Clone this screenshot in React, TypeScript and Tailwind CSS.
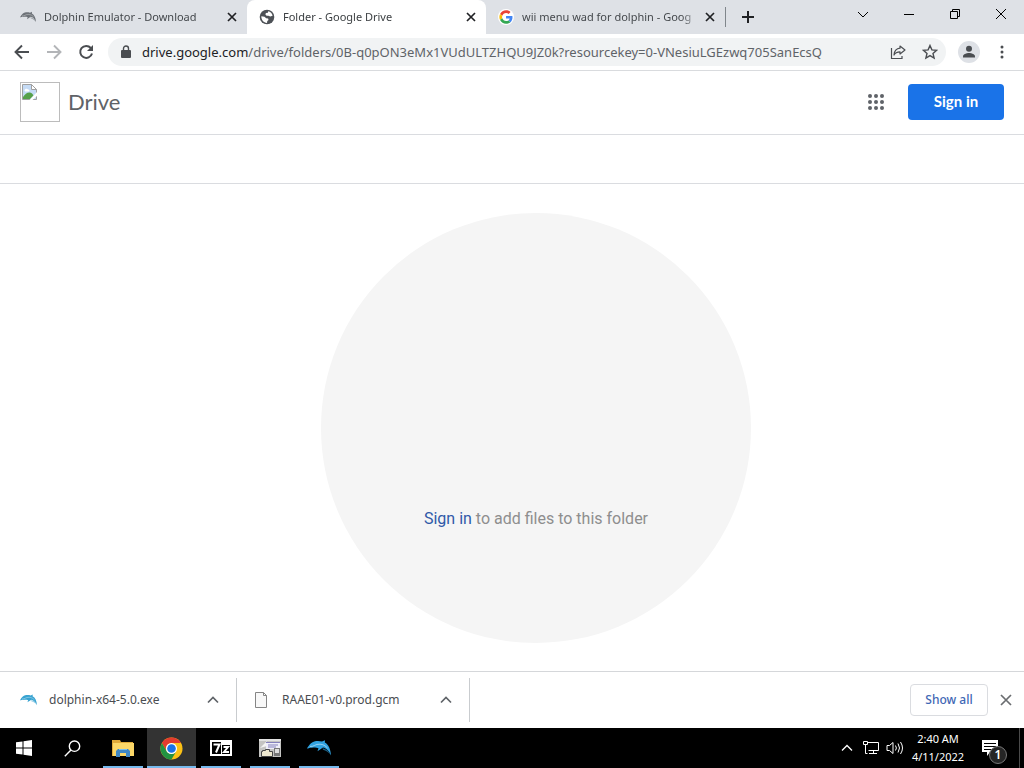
import React from "react";

type IconProps = { className?: string };

const CloseIcon = ({ className = "" }: IconProps) => (
  <svg viewBox="0 0 16 16" className={className} fill="none" stroke="currentColor" aria-hidden="true">
    <path d="M4 4l8 8M12 4l-8 8" />
  </svg>
);

const ChevronUp = ({ className = "" }: IconProps) => (
  <svg viewBox="0 0 12 12" className={className} fill="none" stroke="currentColor" aria-hidden="true">
    <path d="M1 8.5L6 3.5l5 5" />
  </svg>
);

const DolphinIcon = ({ className = "" }: IconProps) => (
  <svg viewBox="0 0 24 16" className={className} fill="currentColor" aria-hidden="true">
    <path d="M0 8.200C1.500 6 2.500 4.500 4 3.200 7 .8 11.500.6 15 1.600L18 .2l-.2 2.400C21.500 4.500 23.600 9 24 15.500 22.300 11.500 19.500 8.200 16 7.600l-5.500 3.600 1-2.900C8.500 7 6 8 4.200 7.800 2.500 7.700 1.500 8.800 0 8.200z" />
    <path d="M15.500 8.200c3.300.5 5.700 2.300 8.500 6.800-3-3-5-4.200-8-5.200z" opacity=".6" />
    <path d="M3 6.400C7 7 8 3.800 13 4.200c3.500.2 5.500 1.600 7.500 3.800" fill="none" stroke="#ffffff" strokeWidth=".9" opacity=".55" />
  </svg>
);

const GlobeIcon = () => (
  <svg viewBox="0 0 16 16" className="size-4 shrink-0" aria-hidden="true">
    <circle cx="8" cy="8" r="7.300" fill="#4d5156" />
    <path d="M9.200 2.300c2.200.5 3.900 2.200 4.400 4.400l-2.300.8-1.900-.8H7.600L6.400 5.600l.5-1.500 2-.4z" fill="#fff" />
    <path d="M2.300 7.200l3.200.5 1.700 1.500 1.900.4.400 1.500-1.200 1-.3 1.800C4.800 13.700 2.200 11 2.300 7.200z" fill="#fff" />
  </svg>
);

const GoogleIcon = () => (
  <svg viewBox="0 0 48 48" className="size-4 shrink-0" aria-hidden="true">
    <circle cx="24" cy="24" r="24" fill="#fff" />
    <g transform="translate(4 4) scale(.84)">
      <path fill="#EA4335" d="M24 9.500c3.540 0 6.710 1.220 9.210 3.600l6.850-6.850C35.900 2.380 30.470 0 24 0 14.620 0 6.510 5.380 2.560 13.220l7.980 6.190C12.430 13.720 17.740 9.500 24 9.500z" />
      <path fill="#4285F4" d="M46.980 24.550c0-1.570-.15-3.090-.38-4.550H24v9.020h12.940c-.58 2.960-2.260 5.480-4.780 7.180l7.730 6c4.510-4.180 7.090-10.360 7.090-17.650z" />
      <path fill="#FBBC05" d="M10.530 28.590A14.500 14.500 0 0 1 9.770 24c0-1.600.27-3.140.76-4.590l-7.980-6.190A23.990 23.990 0 0 0 0 24c0 3.880.92 7.540 2.560 10.780z" />
      <path fill="#34A853" d="M24 48c6.480 0 11.930-2.130 15.890-5.810l-7.730-6c-2.150 1.450-4.920 2.300-8.160 2.300-6.260 0-11.570-4.220-13.470-9.910l-7.980 6.190C6.510 42.620 14.620 48 24 48z" />
    </g>
  </svg>
);

type TabProps = { title: string; icon: React.ReactNode; active?: boolean };

const Tab = ({ title, icon, active = false }: TabProps) => (
  <div
    className={`flex h-[34px] w-[239px] items-center gap-2 pl-3 pr-[7px] ${
      active ? "rounded-t-lg bg-white text-[#3c4043]" : "text-[#45494d]"
    }`}
  >
    {icon}
    <span className="min-w-0 flex-1 whitespace-nowrap mask-r-from-[160px] mask-r-to-[178px] text-[11px] leading-4">
      {title}
    </span>
    <button aria-label={`Close ${title}`} className="size-4 text-[#202124]">
      <CloseIcon className="size-4 stroke-[1.700]" />
    </button>
  </div>
);

const TabStrip = () => (
  <div className="flex h-[34px] bg-[#dee1e6]">
    <div className="flex min-w-0 flex-1 items-center pl-2">
      <Tab title="Dolphin Emulator - Download" icon={<DolphinIcon className="h-3 w-4 shrink-0 text-[#6d7278]" />} />
      <Tab title="Folder - Google Drive" icon={<GlobeIcon />} active />
      <Tab title="wii menu wad for dolphin - Goog" icon={<GoogleIcon />} />
      <div className="h-5 w-px bg-[#80868b]" />
      <button aria-label="New tab" className="ml-[14px] size-4 text-[#202124]">
        <svg viewBox="0 0 16 16" className="size-4" stroke="currentColor" strokeWidth="2" aria-hidden="true">
          <path d="M8 2v12M2 8h12" />
        </svg>
      </button>
    </div>
    <div className="flex h-7 text-black">
      <button aria-label="Search tabs" className="flex w-[46px] items-center justify-center">
        <svg viewBox="0 0 12 12" className="size-3" fill="none" stroke="currentColor">
          <path d="M1 4l5 5 5-5" />
        </svg>
      </button>
      <button aria-label="Minimize" className="flex w-[46px] items-center justify-center">
        <svg viewBox="0 0 10 10" className="size-[10px]" stroke="currentColor">
          <path d="M0 5.500h10" />
        </svg>
      </button>
      <button aria-label="Restore" className="flex w-[46px] items-center justify-center">
        <svg viewBox="0 0 10 10" className="size-[10px]" fill="none" stroke="currentColor">
          <path d="M.5 2.500h7v7h-7zM2.500 2.500v-2h7v7h-2" />
        </svg>
      </button>
      <button aria-label="Close window" className="flex w-[46px] items-center justify-center">
        <svg viewBox="0 0 10 10" className="size-[10px]" stroke="currentColor">
          <path d="M0 0l10 10M10 0L0 10" />
        </svg>
      </button>
    </div>
  </div>
);

const Toolbar = () => (
  <div className="flex h-[37px] items-center border-b border-[#d9dbde] bg-white pl-3 pr-[14px] text-[#4a4d51]">
    <div className="flex gap-3">
      <button aria-label="Back" className="size-5">
        <svg viewBox="0 0 20 20" className="size-5" fill="none" stroke="currentColor" strokeWidth="1.900">
          <path d="M17 10H4M10 3.500L3.500 10l6.500 6.500" />
        </svg>
      </button>
      <button aria-label="Forward" className="size-5 text-[#b3b5b8]">
        <svg viewBox="0 0 20 20" className="size-5" fill="none" stroke="currentColor" strokeWidth="1.900">
          <path d="M3 10h13M10 3.500l6.500 6.500-6.500 6.500" />
        </svg>
      </button>
      <button aria-label="Reload" className="size-5">
        <svg viewBox="0 0 20 20" className="size-5" fill="none" stroke="currentColor" strokeWidth="2">
          <path d="M14.800 6A6 6 0 1 0 16 11.500" />
          <path d="M17 3v6h-6z" fill="currentColor" stroke="none" />
        </svg>
      </button>
    </div>
    <div className="ml-3 flex h-7 min-w-0 flex-1 items-center rounded-full bg-[#f1f3f4] pl-3 pr-2">
      <svg viewBox="0 0 12 14" className="h-[14px] w-3 shrink-0" aria-hidden="true">
        <rect x="1" y="5" width="10" height="8" rx="1" fill="currentColor" />
        <path d="M3.500 5V3.500a2.500 2.500 0 0 1 5 0V5" fill="none" stroke="currentColor" strokeWidth="1.400" />
      </svg>
      <div className="ml-[10px] min-w-0 flex-1 overflow-hidden whitespace-nowrap text-[13px] leading-5 text-[#5f6368]">
        <span className="text-[#202124]">drive.google.com</span>
        /drive/folders/0B-q0pON3eMx1VUdULTZHQU9JZ0k?resourcekey=0-VNesiuLGEzwq705SanEcsQ
      </div>
      <button aria-label="Share" className="size-4">
        <svg viewBox="0 0 16 16" className="size-4" fill="none" stroke="currentColor" strokeWidth="1.200">
          <path d="M1.500 4v10.500h10.500v-2.500" />
          <path d="M10 2l5 4-5 4V7.800C7 7.800 5 9 4 11 4.300 7.200 6.300 4.600 10 4.200z" strokeLinejoin="round" />
        </svg>
      </button>
      <button aria-label="Bookmark" className="ml-4 size-4">
        <svg viewBox="0 0 16 16" className="size-4" fill="none" stroke="currentColor" strokeWidth="1.400">
          <path d="M8 1.500l1.900 4.400 4.700.4-3.600 3.100 1.100 4.700L8 11.600l-4.100 2.500L5 9.400 1.400 6.300l4.700-.4z" />
        </svg>
      </button>
    </div>
    <button aria-label="Profile" className="ml-3 size-[22px]">
      <svg viewBox="0 0 22 22" className="size-[22px]">
        <circle cx="11" cy="11" r="11" fill="#dee1e6" />
        <circle cx="11" cy="7.800" r="3" fill="currentColor" />
        <path d="M5 16.500v-1.200c0-2 3.500-3.300 6-3.300s6 1.300 6 3.300v1.200z" fill="currentColor" />
      </svg>
    </button>
    <button aria-label="Menu" className="ml-[14px] h-4 w-4">
      <svg viewBox="0 0 16 16" className="size-4" fill="currentColor">
        <circle cx="8" cy="3" r="1.500" />
        <circle cx="8" cy="8" r="1.500" />
        <circle cx="8" cy="13" r="1.500" />
      </svg>
    </button>
  </div>
);

const MissingImage = () => (
  <svg viewBox="0 0 40 40" className="size-10" aria-hidden="true">
    <rect x=".5" y=".5" width="39" height="39" fill="#fff" stroke="#bcbcbc" />
    <path d="M2.500 2.500h9l5 5v10h-14z" fill="#c5dbf5" stroke="#a0a0a0" />
    <path d="M4.500 8.500c0-2 3-2.500 3.500-1 1.500-.3 2 1.800.5 2H5z" fill="#fff" />
    <path d="M3 17v-2c2-3 4.500-5 7-4.500 2 .3 3 2 3.500 3L10 17z" fill="#56a04a" />
    <path d="M11.500 2.500v5h5z" fill="#fff" stroke="#a0a0a0" />
    <path d="M17.500 9.500L9.500 18h3l5-4.500z" fill="#fff" />
  </svg>
);

const DriveHeader = () => (
  <header className="flex h-16 items-center border-b border-[#dadce0] px-5 pb-[2px]">
    <a href="#" className="flex items-center gap-2">
      <MissingImage />
      <span className="font-['Lato'] text-[22px] leading-8 text-[#5f6368]">Drive</span>
    </a>
    <button aria-label="Google apps" className="ml-auto size-4 text-[#5f6368]">
      <svg viewBox="0 0 16 16" className="size-4" fill="currentColor">
        {[2, 8, 14].map((y) => [2, 8, 14].map((x) => <circle key={`${x}-${y}`} cx={x} cy={y} r="2" />))}
      </svg>
    </button>
    <button className="ml-6 h-9 w-24 rounded bg-[#1a73e8] pb-[2px] font-['Lato'] text-[15px] font-bold leading-5 text-white">
      Sign in
    </button>
  </header>
);

const FolderView = () => (
  <main className="flex flex-1 items-start justify-center pb-7 pl-12 pt-[29px]">
    <div className="flex size-[430px] justify-center rounded-full bg-[#f5f5f5] pt-[294px] font-['Roboto'] text-[16px] leading-6 text-[#8e8e8e]">
      <p>
        <a href="#" className="text-[#3059a8]">Sign in</a> to add files to this folder
      </p>
    </div>
  </main>
);

type DownloadProps = { name: string; icon: React.ReactNode };

const Download = ({ name, icon }: DownloadProps) => (
  <div className="flex h-11 w-[233px] items-center border-r border-[#c9cccf] pl-4 pr-[17px]">
    {icon}
    <span className="ml-3 flex-1 text-[12px] leading-5 text-[#4a4d51]">{name}</span>
    <button aria-label={`Options for ${name}`} className="size-3 text-[#5f6368]">
      <ChevronUp className="size-3 stroke-[1.700]" />
    </button>
  </div>
);

const DownloadShelf = () => (
  <div className="flex h-[57px] items-center border-t border-[#d5d7da] bg-white pl-1 pr-[10px]">
    <Download name="dolphin-x64-5.0.exe" icon={<DolphinIcon className="h-3 w-[17px] text-[#38a3d1]" />} />
    <Download
      name="RAAE01-v0.prod.gcm"
      icon={
        <svg viewBox="0 0 17 18" className="h-[18px] w-[17px]" fill="#f8f8f8" stroke="#858585" aria-hidden="true">
          <path d="M2.500 1.500h8l3 3v12h-11zM10.500 1.500v3h3" />
        </svg>
      }
    />
    <button className="ml-auto h-8 w-[78px] rounded border border-[#dadce0] pb-px text-[12px] font-medium leading-4 text-[#3f68b5]">
      Show all
    </button>
    <button aria-label="Close downloads" className="ml-[10px] size-4 text-[#6a6d70]">
      <svg viewBox="0 0 16 16" className="size-4" stroke="currentColor" strokeWidth="1.700">
        <path d="M3 3l10 10M13 3L3 13" />
      </svg>
    </button>
  </div>
);

const FolderIcon = () => (
  <svg viewBox="0 0 22 18" className="h-[18px] w-[22px]" aria-hidden="true">
    <path d="M0 1h8l1 2h12v14H0z" fill="#e0aa3a" />
    <path d="M1 4h21v13H1z" fill="#fbd768" />
    <path d="M4 18v-6l2-2h10l2 2v6h-4v-4H8v4z" fill="#3f87c4" />
    <path d="M7 10h8v1H7z" fill="#7cc1ee" />
  </svg>
);

const ChromeIcon = () => (
  <svg viewBox="0 0 48 48" className="size-[23px]" aria-hidden="true">
    <circle cx="24" cy="24" r="23" fill="#fbc116" />
    <path d="M4.080 12.500A23 23 0 0 1 43.920 12.500H24A11.500 11.500 0 0 0 14.040 29.750z" fill="#e33b2e" />
    <path d="M4.080 12.500A23 23 0 0 0 24 47l9.960-17.250A11.500 11.500 0 0 1 14.040 29.750z" fill="#229342" />
    <circle cx="24" cy="24" r="11.500" fill="#fff" />
    <circle cx="24" cy="24" r="9" fill="#1a73e8" />
  </svg>
);

const SevenZipIcon = () => (
  <svg viewBox="0 0 22 16" className="h-4 w-[22px]" aria-hidden="true">
    <path d="M0 0h22v16H0z" fill="#fff" />
    <path d="M2 2h9v12H2zM12 5h8v9h-8z" fill="#000" />
    <path d="M3.500 4.500h6L6 12.500M13.500 7h4.500l-4 5h5" fill="none" stroke="#fff" strokeWidth="2" />
  </svg>
);

const InstallerIcon = () => (
  <svg viewBox="0 0 22 18" className="h-[18px] w-[22px]" aria-hidden="true">
    <path d="M0 0h22v18H0z" fill="#c4c4c2" />
    <path d="M0 0h22v2H0z" fill="#e2e2e2" />
    <path d="M1 9L8 2v5z" fill="#f4f4f4" />
    <path d="M7 3h14v7H7z" fill="#eeeef8" />
    <path d="M7 3.500h14M9 6h10M9 8h8" fill="none" stroke="#8581bd" />
    <path d="M3.500 12.500v-1h3v-1h4v2h3v5h-11v-5z" fill="#eee8cf" stroke="#454545" />
    <path d="M15 9h6v8h-6z" fill="#777" />
    <path d="M16 10h4v4h-4z" fill="#ddd" />
  </svg>
);

type TaskProps = { label: string; icon: React.ReactNode; active?: boolean };

const Task = ({ label, icon, active = false }: TaskProps) => (
  <button
    aria-label={label}
    className={`flex h-10 w-[49px] flex-col items-center ${active ? "bg-[#333333]" : ""}`}
  >
    <span className="flex flex-1 items-center pt-[2px]">{icon}</span>
    <span className={`h-[2px] bg-[#76b9ed] ${active ? "w-full" : "w-10"}`} />
  </button>
);

const Taskbar = () => (
  <footer className="flex h-10 items-center bg-black text-white">
    <button aria-label="Start" className="flex h-10 w-12 items-center justify-center">
      <svg viewBox="0 0 16 16" className="size-4" fill="currentColor">
        <path d="M0 2.300L6.500 1.400v6.100H0zM7.500 1.250L16 0v7.500H7.500zM0 8.500h6.500v6.100L0 13.700zM7.500 8.500H16V16l-8.500-1.250z" />
      </svg>
    </button>
    <button aria-label="Search" className="mr-[2px] flex h-10 w-12 items-center justify-center">
      <svg viewBox="0 0 17 17" className="size-[17px]" fill="none" stroke="currentColor" strokeWidth="1.400">
        <circle cx="10.500" cy="6.200" r="5.200" />
        <path d="M7 10l-6.200 6.200" />
      </svg>
    </button>
    <Task label="File Explorer" icon={<FolderIcon />} />
    <Task label="Google Chrome" icon={<ChromeIcon />} active />
    <Task label="7-Zip" icon={<SevenZipIcon />} />
    <Task label="Installer" icon={<InstallerIcon />} />
    <Task label="Dolphin" icon={<DolphinIcon className="h-4 w-6 text-[#31a2e0]" />} />

    <div className="ml-auto flex h-10 items-center">
      <button aria-label="Show hidden icons" className="size-3">
        <ChevronUp className="size-3 stroke-[1.300]" />
      </button>
      <button aria-label="Network" className="ml-[10px] h-4 w-4">
        <svg viewBox="0 0 16 16" className="size-4" fill="none" stroke="currentColor">
          <path d="M4.500 2.500h11v8h-10M10.500 10.500v3M6 13.500h8M.5 1.500h4v3h-4zM2.500 4.500v9h2" />
        </svg>
      </button>
      <button aria-label="Volume" className="ml-[7px] h-4 w-[18px]">
        <svg viewBox="0 0 18 16" className="h-4 w-[18px]" fill="none" stroke="currentColor">
          <path d="M1 5.500h2.500l3.500-3v11l-3.500-3H1zM9.500 5.500q1.800 2.500 0 5M12 3.500q3 4.500 0 9M14.500 2q4 6 0 12" />
        </svg>
      </button>
      <button className="ml-[7px] w-[54px] whitespace-nowrap text-[11px] leading-[18px]">
        <time dateTime="2022-04-11T02:40" className="flex flex-col items-center">
          <span>2:40 AM</span>
          <span>4/11/2022</span>
        </time>
      </button>
      <button aria-label="Notifications" className="relative ml-4 size-6">
        <svg viewBox="0 0 24 24" className="size-6" aria-hidden="true">
          <path d="M1 4h16v12H9l-3 4v-4H1z" fill="#fff" />
          <path d="M3 7.500h12M3 10.500h12M3 13.500h8" stroke="#000" />
        </svg>
        <span className="absolute -bottom-1 left-2 flex size-[18px] items-center justify-center rounded-full border border-[#777777] bg-[#252525] text-[12px] font-semibold leading-4">
          1
        </span>
      </button>
      <span className="ml-[14px] mr-1 h-10 w-px bg-[#4a4a4a]" />
    </div>
  </footer>
);

export default function App() {
  return (
    <div className="flex min-h-screen flex-col bg-white font-['Noto_Sans',sans-serif]">
      <TabStrip />
      <Toolbar />
      <DriveHeader />
      <div className="h-[49px] border-b border-[#dadce0]" />
      <FolderView />
      <DownloadShelf />
      <Taskbar />
    </div>
  );
}
